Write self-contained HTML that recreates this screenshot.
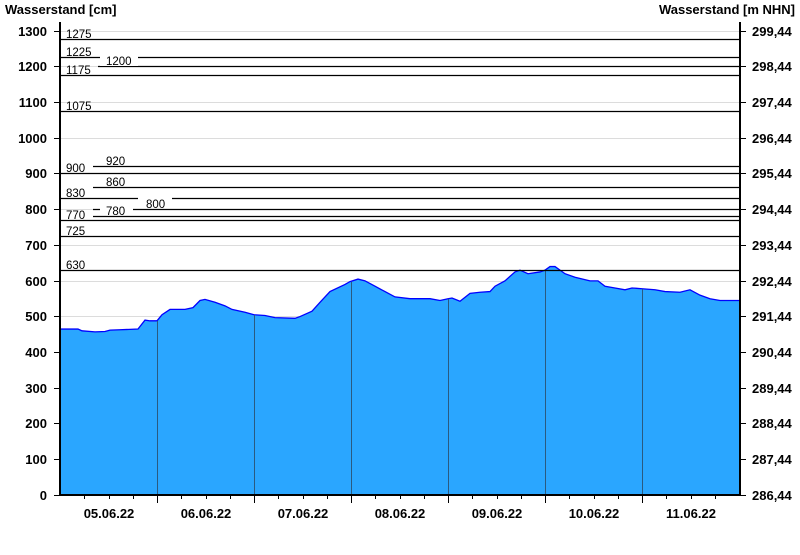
<!DOCTYPE html>
<html><head><style>
body{margin:0;background:#fff;width:800px;height:550px;overflow:hidden}
svg text{font-family:"Liberation Sans",Arial,sans-serif}
.b{font-weight:bold;font-size:13px}
.s{font-size:11.5px}
</style></head><body>
<svg width="800" height="550" xmlns="http://www.w3.org/2000/svg">
<text x="5" y="14" class="b">Wasserstand [cm]</text>
<text x="795" y="14" class="b" text-anchor="end">Wasserstand [m NHN]</text>
<g stroke="#dcdcdc" stroke-width="1">
<line x1="61" x2="740" y1="31.5" y2="31.5"/><line x1="61" x2="740" y1="66.5" y2="66.5"/><line x1="61" x2="740" y1="102.5" y2="102.5"/><line x1="61" x2="740" y1="138.5" y2="138.5"/><line x1="61" x2="740" y1="173.5" y2="173.5"/><line x1="61" x2="740" y1="209.5" y2="209.5"/><line x1="61" x2="740" y1="245.5" y2="245.5"/><line x1="61" x2="740" y1="281.5" y2="281.5"/><line x1="61" x2="740" y1="316.5" y2="316.5"/><line x1="61" x2="740" y1="352.5" y2="352.5"/><line x1="61" x2="740" y1="388.5" y2="388.5"/><line x1="61" x2="740" y1="423.5" y2="423.5"/><line x1="61" x2="740" y1="459.5" y2="459.5"/>
</g>
<g transform="translate(0,495) scale(1,-0.3569)">
<polygon fill="#2aa6ff" stroke="none" points="61,0 61,465 78,465 82,460 95,457 105,458 110,462 120,463 138,465 145,490 150,488 157,488 162,505 170,520 185,520 193,525 200,545 205,548 215,540 225,530 232,520 245,512 254,505 265,503 275,497 295,495 300,500 312,515 320,540 330,570 345,590 350,598 358,605 365,600 375,585 385,570 395,555 410,550 430,550 440,545 448,550 452,552 460,543 470,565 480,568 490,570 495,585 505,600 515,625 520,630 528,620 540,625 545,630 550,640 555,640 560,630 565,620 575,610 590,600 598,600 605,585 615,580 625,575 632,580 642,578 655,575 665,570 680,568 690,575 700,560 710,550 720,545 730,545 739,545 739,0"/>
<polyline fill="none" stroke="#0000ff" stroke-width="1.3" vector-effect="non-scaling-stroke" points="61,465 78,465 82,460 95,457 105,458 110,462 120,463 138,465 145,490 150,488 157,488 162,505 170,520 185,520 193,525 200,545 205,548 215,540 225,530 232,520 245,512 254,505 265,503 275,497 295,495 300,500 312,515 320,540 330,570 345,590 350,598 358,605 365,600 375,585 385,570 395,555 410,550 430,550 440,545 448,550 452,552 460,543 470,565 480,568 490,570 495,585 505,600 515,625 520,630 528,620 540,625 545,630 550,640 555,640 560,630 565,620 575,610 590,600 598,600 605,585 615,580 625,575 632,580 642,578 655,575 665,570 680,568 690,575 700,560 710,550 720,545 730,545 739,545"/>
</g>
<g stroke="#2a5a80" stroke-width="1">
<line x1="157.5" x2="157.5" y1="321" y2="495"/><line x1="254.5" x2="254.5" y1="315" y2="495"/><line x1="351.5" x2="351.5" y1="282" y2="495"/><line x1="448.5" x2="448.5" y1="299" y2="495"/><line x1="545.5" x2="545.5" y1="270" y2="495"/><line x1="642.5" x2="642.5" y1="289" y2="495"/>
</g>
<g stroke="#000" stroke-width="1.2">
<line x1="61" x2="740" y1="39.5" y2="39.5"/>
<line x1="61" x2="740" y1="57.5" y2="57.5"/>
<line x1="98" x2="740" y1="66.5" y2="66.5"/>
<line x1="61" x2="740" y1="75.5" y2="75.5"/>
<line x1="61" x2="740" y1="111.5" y2="111.5"/>
<line x1="93" x2="740" y1="166.5" y2="166.5"/>
<line x1="61" x2="740" y1="173.5" y2="173.5"/>
<line x1="93" x2="740" y1="187.5" y2="187.5"/>
<line x1="61" x2="740" y1="198.5" y2="198.5"/>
<line x1="93" x2="740" y1="209.5" y2="209.5"/>
<line x1="93" x2="740" y1="216.5" y2="216.5"/>
<line x1="61" x2="740" y1="220.5" y2="220.5"/>
<line x1="61" x2="740" y1="236.5" y2="236.5"/>
<line x1="61" x2="740" y1="270.5" y2="270.5"/>
</g>
<g fill="#fff"><rect x="100" y="52" width="38" height="14"/><rect x="138" y="195" width="34" height="12"/><rect x="100" y="205" width="33" height="10"/></g>
<g class="s">
<text x="66" y="38" class="s">1275</text>
<text x="66" y="56" class="s">1225</text>
<text x="106" y="65" class="s">1200</text>
<text x="66" y="74" class="s">1175</text>
<text x="66" y="110" class="s">1075</text>
<text x="106" y="165" class="s">920</text>
<text x="66" y="172" class="s">900</text>
<text x="106" y="186" class="s">860</text>
<text x="66" y="197" class="s">830</text>
<text x="146" y="208" class="s">800</text>
<text x="106" y="215" class="s">780</text>
<text x="66" y="219" class="s">770</text>
<text x="66" y="235" class="s">725</text>
<text x="66" y="269" class="s">630</text>
</g>
<g stroke="#000" stroke-width="2" fill="none">
<line x1="60" x2="60" y1="22" y2="496"/><line x1="740" x2="740" y1="22" y2="496"/><line x1="59" x2="741" y1="495" y2="495"/>
</g>
<g stroke="#000" stroke-width="1">
<path d="M54 31.5h6M54 66.5h6M54 102.5h6M54 138.5h6M54 173.5h6M54 209.5h6M54 245.5h6M54 281.5h6M54 316.5h6M54 352.5h6M54 388.5h6M54 423.5h6M54 459.5h6M54 495.5h6"/>
<path d="M740 31.5h6M740 66.5h6M740 102.5h6M740 138.5h6M740 173.5h6M740 209.5h6M740 245.5h6M740 281.5h6M740 316.5h6M740 352.5h6M740 388.5h6M740 423.5h6M740 459.5h6M740 495.5h6"/>
<path d="M157.5 495v8M254.5 495v8M351.5 495v8M448.5 495v8M545.5 495v8M642.5 495v8"/>
<path d="M84.5 495v4M109.5 495v4M133.5 495v4M181.5 495v4M206.5 495v4M230.5 495v4M278.5 495v4M303.5 495v4M327.5 495v4M375.5 495v4M400.5 495v4M424.5 495v4M472.5 495v4M497.5 495v4M521.5 495v4M569.5 495v4M594.5 495v4M618.5 495v4M666.5 495v4M691.5 495v4M715.5 495v4"/>
</g>
<g class="b" text-anchor="end">
<text x="47" y="36">1300</text><text x="47" y="71">1200</text><text x="47" y="107">1100</text><text x="47" y="143">1000</text><text x="47" y="178">900</text><text x="47" y="214">800</text><text x="47" y="250">700</text><text x="47" y="286">600</text><text x="47" y="321">500</text><text x="47" y="357">400</text><text x="47" y="393">300</text><text x="47" y="428">200</text><text x="47" y="464">100</text><text x="47" y="500">0</text>
</g>
<g class="b">
<text x="752" y="36">299,44</text><text x="752" y="71">298,44</text><text x="752" y="107">297,44</text><text x="752" y="143">296,44</text><text x="752" y="178">295,44</text><text x="752" y="214">294,44</text><text x="752" y="250">293,44</text><text x="752" y="286">292,44</text><text x="752" y="321">291,44</text><text x="752" y="357">290,44</text><text x="752" y="393">289,44</text><text x="752" y="428">288,44</text><text x="752" y="464">287,44</text><text x="752" y="500">286,44</text>
</g>
<g class="b" text-anchor="middle">
<text x="109" y="518">05.06.22</text><text x="206" y="518">06.06.22</text><text x="303" y="518">07.06.22</text><text x="400" y="518">08.06.22</text><text x="497" y="518">09.06.22</text><text x="594" y="518">10.06.22</text><text x="691" y="518">11.06.22</text>
</g>
</svg>
</body></html>
